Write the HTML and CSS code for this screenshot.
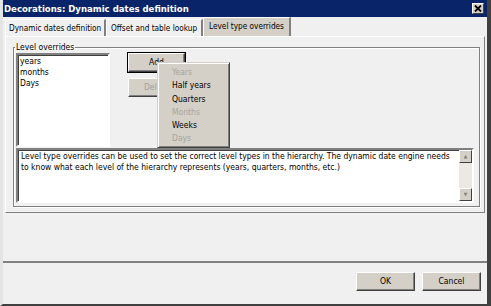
FILE: index.html
```html
<!DOCTYPE html>
<html lang="en">
<head>
    <meta charset="UTF-8">
    <title>Decorations: Dynamic dates definition</title>
    <link rel="stylesheet" href="styles.css">
</head>
<body>
    <div class="window">
        <!-- Title bar -->
        <div class="titlebar">
            <span class="title">Decorations: Dynamic dates definition</span>
            <span class="close">
                <svg width="8" height="7" viewBox="0 0 8 7"><path d="M1 0.5 L7 6.5 M7 0.5 L1 6.5" stroke="#000" stroke-width="1.8"/></svg>
            </span>
        </div>

        <!-- Tabs -->
        <div class="tabs">
            <div class="tab t1">Dynamic dates definition</div>
            <div class="tab t2">Offset and table lookup</div>
            <div class="tab t3 active">Level type overrides</div>
        </div>

        <div class="panel">
            <fieldset class="group">
                <legend>Level overrides</legend>
                <div class="row">
                    <ul class="list">
                        <li>years</li>
                        <li>months</li>
                        <li>Days</li>
                    </ul>
                    <div class="buttons">
                        <div class="btn focus">Add</div>
                        <div class="btn disabled">Delete</div>
                        <!-- popup menu opened from Add -->
                        <ul class="menu">
                            <li class="off">Years</li>
                            <li>Half years</li>
                            <li>Quarters</li>
                            <li class="off">Months</li>
                            <li>Weeks</li>
                            <li class="off">Days</li>
                        </ul>
                    </div>
                </div>
                <div class="info">
                    <p>Level type overrides can be used to set the correct level types in the hierarchy. The dynamic date engine needs to know what each level of the hierarchy represents (years, quarters, months, etc.)</p>
                    <div class="scroll">
                        <span class="arrow">&#9650;</span>
                        <span class="track"></span>
                        <span class="arrow">&#9660;</span>
                    </div>
                </div>
            </fieldset>
        </div>

        <div class="footer">
            <div class="btn">OK</div>
            <div class="btn">Cancel</div>
        </div>
    </div>
</body>
</html>
```

FILE: styles.css
```css
* {
    margin: 0;
    padding: 0;
    box-sizing: border-box;
}

body {
    font-family: "DejaVu Sans Condensed", "DejaVu Sans", sans-serif;
    font-stretch: condensed;
    font-size: 8.5px;
    color: #000;
    background: #f0f0f0;
}

.window {
    width: 491px;
    height: 306px;
    background: #f0f0f0;
    border-left: 3px solid #e4e4e4;
    border-right: 4px solid #404040;
    border-bottom: 2px solid #404040;
    display: flex;
    flex-direction: column;
}
.window > * {
    flex-shrink: 0;
}

/* Title bar */
.titlebar {
    height: 17px;
    background: #0a246a;
    color: #fff;
    font-weight: bold;
    font-size: 9.5px;
    display: flex;
    align-items: center;
    justify-content: space-between;
    padding: 0 3px 0 1px;
}
.close {
    width: 12px;
    height: 11px;
    background: #d4d0c8;
    border: 1px solid;
    border-color: #fff #404040 #404040 #fff;
    display: flex;
    align-items: center;
    justify-content: center;
}

/* Tabs */
.tabs {
    display: flex;
    padding-left: 2px;
    height: 19px;
    align-items: flex-end;
}
.tab {
    height: 17px;
    line-height: 16px;
    padding-left: 3px;
    font-size: 8.2px;
    border-right: 2px solid #808080;
    border-top: 1px solid #fff;
    border-left: 1px solid #fff;
    white-space: nowrap;
}
.t1 { width: 101px; }
.t2 { width: 97px; padding-left: 4px; }
.t3 { width: 88px; }
.tab.active {
    height: 19px;
    line-height: 17px;
    background: #d4d0c8;
    padding-left: 5px;
}

/* Panel */
.panel {
    height: 177px;
    margin: 0 2px;
    border: 1px solid;
    border-color: #fff #808080 #808080 #fff;
    padding: 5px 4px 5px 7px;
}
.group {
    height: 100%;
    border: 1px solid #808080;
    box-shadow: inset 1px 1px 0 #fff, 1px 1px 0 #fff;
    padding: 0 5px 0 2px;
}
.group legend {
    margin-left: -1px;
    padding: 0 1px;
    height: 11px;
    line-height: 10px;
}
.row {
    display: flex;
    height: 94px;
}
.list {
    list-style: none;
    width: 94px;
    height: 94px;
    background: #fff;
    border: 2px solid;
    border-color: #808080 #fff #fff #808080;
    box-shadow: inset 1px 1px 0 #404040;
    padding: 1px 2px;
    line-height: 11px;
}
.buttons {
    position: relative;
    margin-left: 18px;
    display: flex;
    flex-direction: column;
    gap: 6px;
}
.btn {
    width: 57px;
    height: 19px;
    background: #d4d0c8;
    border: 1px solid;
    border-color: #fff #404040 #404040 #fff;
    box-shadow: inset -1px -1px 0 #808080;
    text-align: center;
    line-height: 16px;
}
.btn.focus {
    outline: 1px solid #000;
}
.btn.disabled {
    color: #a0a0a0;
}

/* Popup menu */
.menu {
    position: absolute;
    left: 29px;
    top: 9px;
    width: 73px;
    height: 86px;
    background: #d4d0c8;
    list-style: none;
    border: 1px solid;
    border-color: #d4d0c8 #404040 #404040 #d4d0c8;
    box-shadow: inset 1px 1px 0 #fff, inset -1px -1px 0 #808080;
    padding: 3px 0;
}
.menu li {
    height: 13.3px;
    line-height: 13px;
    padding-left: 14px;
}
.menu li.off {
    color: #a8a49c;
}

/* Info text */
.info {
    display: flex;
    margin-top: 1px;
    height: 55px;
    background: #fff;
    border: 2px solid;
    border-color: #808080 #fff #fff #808080;
    box-shadow: inset 1px 1px 0 #404040;
}
.info p {
    flex: 1;
    padding: 1px 3px;
    line-height: 11px;
}
.scroll {
    width: 13px;
    display: flex;
    flex-direction: column;
    background: #ece9e4;
}
.arrow {
    height: 13px;
    background: #d4d0c8;
    border: 1px solid;
    border-color: #fff #404040 #404040 #fff;
    font-size: 5px;
    color: #808080;
    text-align: center;
    line-height: 11px;
}
.track {
    flex: 1;
}

/* Footer */
.footer {
    flex: 1;
    margin-top: 48px;
    border-top: 2px solid #808080;
    display: flex;
    justify-content: flex-end;
    gap: 7px;
    padding: 9px 6px 0 0;
}
.footer .btn {
    width: 59px;
}
```
